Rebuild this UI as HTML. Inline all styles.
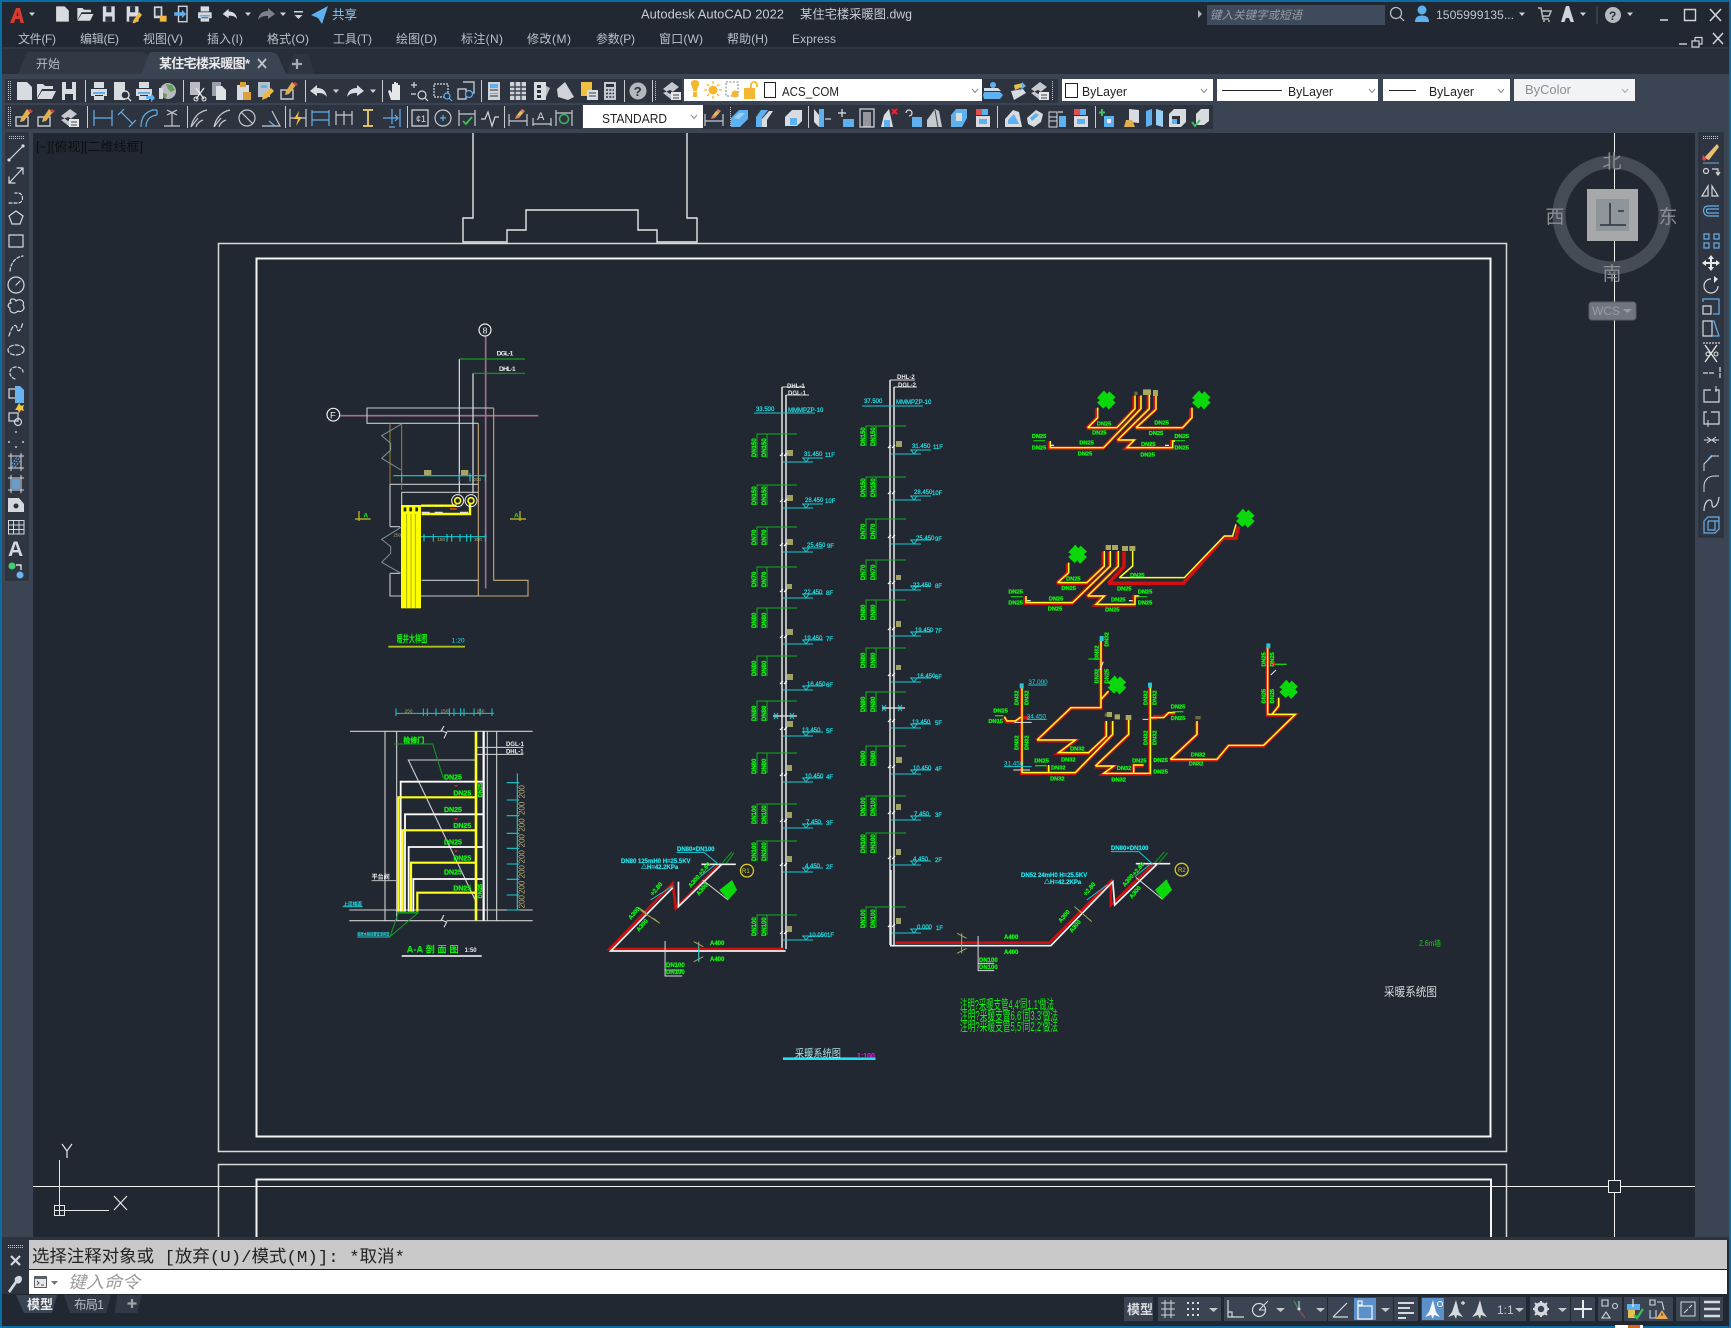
<!DOCTYPE html>
<html lang="zh"><head><meta charset="utf-8"><title>AutoCAD</title>
<style>
html,body{margin:0;padding:0;background:#222831;width:1731px;height:1328px;overflow:hidden}
svg{display:block;position:absolute;left:0;top:0;font-family:"Liberation Sans","Noto Sans CJK SC",sans-serif}
svg *{vector-effect:non-scaling-stroke}
.m{font-size:12px;fill:#b9c0c8}
.g{fill:none;stroke:#10b020;stroke-width:1}
.w{fill:none;stroke:#e8e8e8;stroke-width:1.5}
.c{fill:none;stroke:#19c8d0;stroke-width:1}
.r{fill:none;stroke:#d01010;stroke-width:3.6;stroke-linejoin:miter}
.y{fill:none;stroke:#ffff20;stroke-width:1.5}
.ic{fill:none;stroke:#d5d9de;stroke-width:1.2}
.ib{fill:none;stroke:#66aee8;stroke-width:1.2}
.dg{font-size:6px;font-weight:bold;fill:#10ee10;stroke:#10ee10;stroke-width:.3}
.dc{font-size:6px;fill:#20e0e8;stroke:#20e0e8;stroke-width:.2}
.dz{font-size:17px;font-weight:bold;fill:#10ee10;stroke:#10ee10;stroke-width:.3}
.dw{font-size:6px;font-weight:bold;fill:#e8e8e8}
.sb{fill:#3b4453}
</style></head><body>
<svg width="1731" height="1328" viewBox="0 0 1731 1328" xmlns="http://www.w3.org/2000/svg">
<defs>
<path id="n" fill="#d8dbdf" d="M-7-9H3l5 5V9H-7z"/>
<path id="o" fill="#d8dbdf" d="M-9-7H-3L-1-5H7V-2H-4L-9 7ZM-4 0H10L6 8H-9Z"/>
<g id="s"><path fill="#d8dbdf" d="M-7-9H7V9H-7z"/><path fill="#2b323e" d="M-3-9H3V-2H-3zM-4 3H4V9H-4z"/></g>
<g id="sa"><use href="#s"/><path fill="#f0b840" d="M8-2l3 3-7 9-4 1 1-4z"/></g>
<g id="pr"><path fill="#d8dbdf" d="M-5-9H5V-3H-5zM-8-2H8V5H5V9H-5V5H-8z"/><path fill="#5fb0ee" d="M-6 1H6V3H-6z"/><path fill="#2b323e" d="M-4 4H4V5H-4z"/></g>
<g id="pv"><path fill="#d8dbdf" d="M-7-9H4V9H-7z"/><circle cx="4" cy="4" r="4" fill="#2b323e" stroke="#d8dbdf" stroke-width="1.4"/><path stroke="#d8dbdf" stroke-width="1.4" d="M7 7l3 3"/></g>
<g id="pb"><use href="#pr"/><path fill="#5fb0ee" d="M2 5h5V2l4 5-4 4V8H2z"/></g>
<g id="gl"><circle r="8" fill="#b8bcc2"/><path fill="#6aa05a" d="M-2-7l6 1 3 5-4 2-3-3zM-5 2l4 1-1 5-3-2z"/><path fill="#d8dbdf" d="M-9-3H-5V8H-9z"/></g>
<g id="cu"><path fill="#b8bcc2" d="M-7-9H3V4H-7z"/><path stroke="#eee" stroke-width="1.2" fill="none" d="M-1-3l8 11M7-3L-1 8"/><circle cx="-1" cy="8" r="2" fill="none" stroke="#eee"/><circle cx="7" cy="8" r="2" fill="none" stroke="#eee"/></g>
<g id="cp"><path fill="#9aa0a8" d="M-7-9H2V5H-7z"/><path fill="#e0e3e6" d="M-3-5H3l4 4V9H-3z"/></g>
<g id="pa"><path fill="#d8dbdf" d="M-6-6H6V9H-6z"/><path fill="#d9a23a" d="M-3-9H3V-4H-3zM0 1H8V9H0z"/></g>
<g id="ma"><path fill="#b8c2cc" d="M-7-9H5V6H-7z"/><path fill="#5fb0ee" d="M-4-6H2V-3H-4z"/><path fill="#f0b840" d="M-2 4L6-3l3 3-7 7-5 2z"/></g>
<g id="be"><path fill="none" stroke="#c5c9ce" stroke-width="1.4" d="M-8-1H4V8H-8z"/><path fill="#e0b050" d="M3-9l4 3-7 9-4 1 1-4z"/><path fill="#d04040" d="M6-9l3 2-2 2-3-2z"/></g>
<path id="un" fill="#d8dbdf" d="M-9 0L-2-6V-3C4-3 7 0 8 6C5 2 2 2-2 2V5Z"/>
<path id="re" fill="#d8dbdf" d="M9 0L2-6V-3C-4-3-7 0-8 6C-5 2-2 2 2 2V5Z"/>
<path id="dn" fill="#d0d4d8" d="M-3-1.5H3L0 2Z"/>
<path id="ha" fill="#e4e6e8" d="M-5 9L-8 0l2-1 2 3V-7h2V-2V-9h2V-2V-8h2V-2V-6h2V3L4 9z"/>
<g id="zm"><circle cx="3" cy="4" r="4" fill="none" stroke="#d5d9de" stroke-width="1.2"/><path stroke="#d5d9de" stroke-width="1.2" d="M6 7l3 3M-8-6h6M-5-9v6M-8 3h5"/></g>
<g id="zw"><path fill="none" stroke="#d5d9de" stroke-width="1.2" stroke-dasharray="2 1" d="M-8-7H6V6H-8z"/><circle cx="5" cy="5" r="3" fill="#2b323e" stroke="#5fb0ee" stroke-width="1.2"/><path stroke="#5fb0ee" stroke-width="1.2" d="M7 7l3 3"/></g>
<g id="zp"><path fill="none" stroke="#d5d9de" stroke-width="1.2" d="M-8-2H0V8H-8zM-3-9H8V2H3"/><circle cx="3" cy="3" r="3.5" fill="#2b323e" stroke="#5fb0ee" stroke-width="1.2"/></g>
<g id="pp"><path fill="#cfd3d8" d="M-6-9H6V9H-6z"/><path fill="#5fb0ee" d="M-4-7H4V-3H-4zM-4 2H4V3H-4z"/><path stroke="#2b323e" d="M-4-1H4M-4 5H4"/></g>
<g id="sh"><path fill="#cfd3d8" d="M-8-9H8V9H-8z"/><path stroke="#3b4453" stroke-width="1.4" d="M-8-4H8M-8 0H8M-8 4H8M-3-9V9M3-9V9"/></g>
<g id="tp"><path fill="#d8dbdf" d="M-7-9H5V9H-7z"/><path fill="#2b323e" d="M-4-6H0V-3H-4zM-4-1H0V2H-4zM-4 4H0V7H-4z"/><path fill="#b8bcc2" d="M5-5l4 2-4 9z"/></g>
<path id="wd" fill="#cfd3d8" d="M-8-2L0-9 9 6 3 9-7 6z"/>
<g id="yd"><path fill="#f0c040" d="M-8-9H3V5H-8z"/><path fill="#d8dbdf" d="M-2-1H9V9H-2z"/><path stroke="#3b4453" d="M0 2H7M0 5H7"/></g>
<g id="ca"><path fill="#c5c9ce" d="M-6-9H6V9H-6z"/><path fill="#2b323e" d="M-4-7H4V-4H-4z"/><path stroke="#2b323e" stroke-width="1.4" stroke-dasharray="2 1.3" d="M-4-1H4M-4 2.500H4M-4 6H4"/></g>
<g id="q"><circle r="8.500" fill="#b5b8bc"/><text x="-4.300" y="5" font-size="13" font-weight="bold" fill="#2b323e">?</text></g>
<g id="la"><path fill="#c5c9ce" d="M-9-2L0-9 7-4-2 3zM-9 2l9 7 7-5-9-5z"/><path fill="#e8e8e8" d="M-1 1H9V9H-1z"/><path stroke="#3b4453" d="M1 4H7M1 7H7"/></g>
<g id="lb"><path fill="#5fb0ee" d="M-9 1h16l3 3-3 4H-9l-1-4z"/><path fill="#d8dbdf" d="M-9-3H5l3 3H-9z"/><circle cx="0" cy="-6" r="3" fill="#5fb0ee"/></g>
<g id="lc"><path fill="#d8dbdf" d="M-7 0L5-2 8 2-4 9z"/><path fill="#e0c050" d="M-4-6L5-8 7-5-3-1z"/><path fill="#5fb0ee" d="M0-4h4V-9l4 4-4 3z"/></g>
<g id="dh"><path fill="none" stroke="#66aee8" stroke-width="1.2" d="M-9-8V8M9-8V8M-9 0H9"/></g>
<g id="da"><path fill="none" stroke="#66aee8" stroke-width="1.2" d="M-9-3L-3-9M2 9L9 2M-6-6L6 6"/></g>
<g id="dr"><path fill="none" stroke="#66aee8" stroke-width="1.2" d="M-8 9C-8 0-4-6 4-8M-3 9C-3 3 0-2 8-3M8-8L3-8M8-8V-3"/></g>
<g id="do"><path fill="none" stroke="#c5c9ce" stroke-width="1.2" d="M-8 8H8M0 8V-6M-5-8L5-3M5-8L-5-3"/></g>
<g id="dl"><path fill="none" stroke="#c5c9ce" stroke-width="1.2" d="M-9 9C-7 0-2-6 7-8M-9 9L-2 0M-4 9C-3 5 0 3 3 2"/></g>
<g id="dc"><circle r="8" fill="none" stroke="#c5c9ce" stroke-width="1.2"/><path stroke="#c5c9ce" stroke-width="1.2" d="M-6-6L6 6"/></g>
<g id="dn2"><path fill="none" stroke="#c5c9ce" stroke-width="1.2" d="M-9 8H9L1-7"/><path stroke="#66aee8" stroke-width="1.2" d="M-2 3L4 8"/></g>
<g id="qd"><path fill="none" stroke="#c5c9ce" stroke-width="1.2" d="M-8-9V9M8-9V9M-8 0H8"/><path fill="#f0c040" d="M1-7L-4 1H0L-2 8 4-1H0z"/></g>
<g id="ba"><path fill="none" stroke="#66aee8" stroke-width="1.2" d="M-9-8V8M8-8V8M-9-6H8M-9 2H8"/></g>
<g id="co"><path fill="none" stroke="#c5c9ce" stroke-width="1.2" d="M-8-7V7M0-7V7M8-7V7M-8-3H8"/></g>
<g id="sp"><path stroke="#d8c070" stroke-width="2" d="M-5-8H5M-5 8H5M0-8V8"/></g>
<g id="tl"><path fill="none" stroke="#66aee8" stroke-width="1.2" d="M8-9V9M-9 0H6M3-3L6 0 3 3M0-9V6M-3 9H3"/></g>
<g id="il"><path fill="none" stroke="#d5d9de" stroke-width="1.2" d="M-8-8H8V8H-8z"/><text x="-4" y="4" font-size="9" fill="#d5d9de">¢1</text></g>
<g id="cc"><circle r="8" fill="none" stroke="#c5c9ce" stroke-width="1.2"/><path stroke="#66aee8" stroke-width="1.2" d="M-3 0H3M0-3V3"/></g>
<g id="io"><path fill="none" stroke="#c5c9ce" stroke-width="1.2" d="M-8-8V8M8-8V8M-8-4H8"/><path fill="none" stroke="#40c050" stroke-width="1.8" d="M-4 3L-1 6 5-1"/></g>
<g id="wv"><path fill="none" stroke="#d5d9de" stroke-width="1.2" d="M-9 1H-5L-2-6 2 8 5-1H9"/></g>
<g id="dd"><path fill="none" stroke="#c5c9ce" stroke-width="1.2" d="M-9-4V8M9-4V8M-9 3H9"/><path fill="#e08060" d="M4-9l3 2-6 7-4 1 1-3z"/><path fill="#e0c050" d="M2-7l3 2-3 3-3-1z"/></g>
<g id="da2"><text x="-5" y="2" font-size="11" fill="#d5d9de">A</text><path fill="none" stroke="#c5c9ce" stroke-width="1.2" d="M-9 0V8M9 0V8M-9 6H9"/></g>
<g id="du"><path fill="none" stroke="#c5c9ce" stroke-width="1.2" d="M-8-8V8M8-8V8M-8-5H8"/><circle cy="1" r="4.500" fill="none" stroke="#40b060" stroke-width="1.6"/></g>
<g id="bk"><path fill="#5fb0ee" d="M-8 0L0-8H9V1L1 9H-8z"/><path fill="#9acff5" d="M-5 0L0-5H6L0 1z"/></g>
<g id="bw"><path fill="#5fb0ee" d="M-8 9V-1L-3-8H4L-2 0V9z"/><path fill="#d8dbdf" d="M-2 1L5-7H9L3 2V9H-2z"/></g>
<g id="bc"><path fill="#d8dbdf" d="M-8-1L-1-8H9V3L4 8H-8z"/><path fill="#5fb0ee" d="M-3 0H4V7H-3z"/></g>
<g id="bv"><path fill="#d8dbdf" d="M-8-9L-3-3V9L-8 4z"/><path fill="#5fb0ee" d="M-3-9H2V9H-3z"/><path stroke="#fff" d="M3 1H9"/></g>
<g id="bt"><path stroke="#e4e6e8" stroke-width="1.2" d="M-4-9V-1M-8-5H0"/><path fill="#5fb0ee" d="M-3 1H8V9H-3z"/></g>
<g id="bd"><path fill="none" stroke="#d8dbdf" stroke-width="1.2" d="M-7-9H7V9H-7z"/><path fill="#d8dbdf" d="M-4-6H4V9H-4z" fill-opacity=".6"/></g>
<g id="bx"><path fill="#d8dbdf" d="M-8 9L-5-3 0-9 4 9z"/><path fill="#5fb0ee" d="M-5 2H1V9H-5z" /><path stroke="#e23" stroke-width="2" d="M3-9L8-4M8-9L3-4"/></g>
<g id="br"><path fill="none" stroke="#e4e6e8" stroke-width="1.2" d="M-8-5a3 3 0 1 1 3 3"/><path fill="#5fb0ee" d="M-2-1H8V9H-2z"/></g>
<g id="bf"><path fill="#c5c9ce" d="M-8 9V2L0-9 4-7 7 9z"/><path stroke="#3b4453" d="M0-8L3 9"/></g>
<g id="bb"><path fill="#5fb0ee" d="M-8-3L-3-9H8V0L3 9H-8z"/><path fill="#d8dbdf" d="M-3-5H3V3H-3z"/></g>
<g id="bq"><path fill="#e05050" d="M-6-9H0V-3H-6z"/><path fill="#5fb0ee" d="M0-9H6V-3H0z"/><path fill="#d8dbdf" d="M-6-2H8V9H-6z"/><path fill="#5fb0ee" d="M-3 1H5V6H-3z"/></g>
<g id="bh"><path fill="#d8dbdf" d="M-8 9V1L0-8 6-6 9 9z"/><path fill="#5fb0ee" d="M-5 6V2L1-4 6 6z"/></g>
<g id="bi"><path fill="#d8dbdf" d="M-8 0L1-8 8-4 6 4-1 9-7 6z"/><path fill="#5fb0ee" d="M-5 0L1-5 4-3-3 3z"/></g>
<g id="bl2"><path fill="none" stroke="#d8dbdf" d="M-8-6H0V9H-8z"/><path stroke="#d8dbdf" d="M-8-1H0M-8 3H0"/><path fill="#5fb0ee" d="M2-2H9V9H2z"/><path stroke="#fff" d="M1-6H6"/></g>
<g id="ta"><path stroke="#40c060" stroke-width="2" d="M-5-9V-2M-8-5.500H-2"/><path fill="#5fb0ee" d="M-3-2H7V9H-3z"/><path fill="#eef" d="M0 1H4V5H0z"/></g>
<g id="tb"><path fill="#d8dbdf" d="M-3-9L7-8V5L-3 4z"/><path fill="#e0b050" d="M-6 2H0L3 9H-8z"/></g>
<g id="tc"><path fill="#5fb0ee" d="M-8-7L-2-9V7L-8 9z"/><path fill="#9acff5" d="M2-9L9-7V9L2 7z"/></g>
<g id="td"><path fill="#d8dbdf" d="M-8-4L-3-9H9V4L4 9H-8z"/><path fill="#2b323e" d="M-5-2H3V6H-5z"/><path fill="#5fb0ee" d="M-5 1H0V6H-5z"/></g>
<g id="te"><path fill="#d8dbdf" d="M-4-4L1-9H9V3L4 7H-4z"/><path fill="none" stroke="#40c060" stroke-width="1.8" d="M-8 4L-5 8 0 2"/></g>
<path id="bl" fill="#0ad80a" d="M-27-6L-6-29 3-18 10-26 29-8 20 0 29 8 8 29 0 18-8 26-27 8-18 0z"/>
<g id="lv"><path fill="none" stroke="#19c8d0" d="M0 0H30M19-4H40M20-4l3 4 3-4"/><path fill="none" stroke="#fff" stroke-width="1.200" d="M-3-6l3-3M1-6l3-3"/></g>
<path id="ex" fill="none" stroke="#e8e8e8" d="M-2-7L2-2-2 2 2 7"/>
</defs>

<!-- window chrome -->
<rect width="1731" height="1328" fill="#222831"/>
<rect x="0" y="29" width="1731" height="19" fill="#222833"/>
<path d="M0 48H1731" stroke="#3b4453"/>
<rect y="49" width="1731" height="25" fill="#282f3a"/>
<rect y="74" width="1731" height="59" fill="#3b4453"/>

<!-- title bar -->
<path fill="#d83a30" d="M10 23L16 8H20L24 23H20.500L19.500 19H15.500L14 23ZM16.500 16H18.500L17.600 11.500Z"/>
<use href="#dn" x="32" y="14"/>
<g transform="translate(0,14) scale(.85)">
<use href="#n" x="73"/><use href="#o" x="100"/><use href="#s" x="128"/><use href="#sa" x="156"/>
</g>
<g transform="translate(0,14) scale(.85)">
<path fill="#cfd3d8" d="M181-9H191V5H181z"/><path fill="#2b323e" d="M183-7H189V2H183z"/><path fill="#f0b840" d="M188 2H196V9H188z"/>
<path fill="none" stroke="#cfd3d8" stroke-width="1.400" d="M210-9H220V9H210z"/><path fill="#5fb0ee" d="M205-2H214V-5L219 0 214 5V2H205z"/>
<use href="#pr" x="241"/><use href="#un" x="271"/>
</g>
<use href="#dn" x="248" y="14"/><use href="#re" x="266" y="14" opacity=".5" transform="translate(0,0)"/><use href="#dn" x="283" y="14"/>
<path fill="#d0d4d8" d="M294 11H303V12.500H294zM294.500 15H302.500L298.500 19z"/>
<path fill="#5fb0ee" d="M311 15L328 6 322 24 318 18z"/>
<text x="332" y="19" font-size="12.500" fill="#8fc4f0">共享</text>
<text x="641" y="18.500" font-size="12.500" fill="#c8ccd2" textLength="143" lengthAdjust="spacingAndGlyphs">Autodesk AutoCAD 2022</text>
<text x="800" y="18.500" font-size="12.500" fill="#c8ccd2" textLength="112" lengthAdjust="spacingAndGlyphs">某住宅楼采暖图.dwg</text>
<path fill="#b0b4b8" d="M1198 10L1202 14 1198 18z"/>
<rect x="1207" y="5" width="178" height="20" fill="#3f4a5c"/>
<text x="1210" y="19" font-size="11.500" font-style="italic" fill="#969ca4">键入关键字或短语</text>
<circle cx="1396" cy="13" r="5.500" fill="none" stroke="#c0c4c8" stroke-width="1.200"/><path stroke="#c0c4c8" stroke-width="1.200" d="M1400 17L1404 21"/>
<circle cx="1422" cy="10" r="4.500" fill="#5fb0ee"/><path fill="#5fb0ee" d="M1415 22C1415 17 1418 15.500 1422 15.500 1426 15.500 1429 17 1429 22z"/>
<text x="1436" y="19" font-size="12" fill="#c0c6cc" textLength="78" lengthAdjust="spacingAndGlyphs">1505999135...</text>
<use href="#dn" x="1522" y="14"/>
<path fill="none" stroke="#b8bcc0" stroke-width="1.500" d="M1538 8H1541L1543 19H1549M1541 11H1551L1549 16H1542"/><circle cx="1544" cy="21" r="1" fill="#b8bcc0"/><circle cx="1549" cy="21" r="1" fill="#b8bcc0"/>
<path fill="#d0d4d8" d="M1566 6H1569L1574 22H1570.500L1569 18H1566L1564.500 22H1561z"/>
<use href="#dn" x="1583" y="14"/><path stroke="#4a5260" d="M1597 6V24"/>
<circle cx="1613" cy="15" r="8" fill="#b5b8bc"/><text x="1609" y="20" font-size="12" font-weight="bold" fill="#2b323e">?</text><use href="#dn" x="1630" y="14"/>
<path stroke="#d0d4d8" stroke-width="1.600" d="M1660 20H1668"/>
<rect x="1684.500" y="9.500" width="11" height="11" fill="none" stroke="#d0d4d8" stroke-width="1.400"/>
<path stroke="#d0d4d8" stroke-width="1.600" d="M1710 9L1721 21M1721 9L1710 21"/>
<path stroke="#d0d4d8" stroke-width="1.400" d="M1679 44H1687"/>
<path fill="none" stroke="#d0d4d8" stroke-width="1.200" d="M1695 37.500H1702V44H1699M1695 37.500V41M1692 41H1699V47H1692z"/>
<path stroke="#d0d4d8" stroke-width="1.500" d="M1713 33L1723 44M1723 33L1713 44"/>

<!-- menu -->
<g class="m">
<text x="18" y="43" textLength="38">文件(F)</text><text x="80" y="43" textLength="39">编辑(E)</text><text x="143" y="43" textLength="40">视图(V)</text><text x="207" y="43" textLength="36">插入(I)</text><text x="267" y="43" textLength="42">格式(O)</text><text x="333" y="43" textLength="39">工具(T)</text><text x="396" y="43" textLength="41">绘图(D)</text><text x="461" y="43" textLength="42">标注(N)</text><text x="527" y="43" textLength="44">修改(M)</text><text x="596" y="43" textLength="39">参数(P)</text><text x="659" y="43" textLength="44">窗口(W)</text><text x="727" y="43" textLength="41">帮助(H)</text><text x="792" y="43" textLength="44">Express</text>
</g>
<!-- tabs -->
<path fill="#323945" d="M18 74L26 54Q27 52 30 52H140Q146 52 148 56L155 74z"/>
<path fill="#3b4453" d="M141 74L149 54Q150 52 153 52H270Q276 52 278 56L286 74z"/>
<path fill="#2f3642" d="M287 74L293 56Q294 54 297 54H304Q308 54 309 56L314 74z"/>
<text x="36" y="68" font-size="12" fill="#b5bbc3">开始</text>
<text x="159" y="68" font-size="13" font-weight="bold" fill="#e8eaec" textLength="91">某住宅楼采暖图*</text>
<path stroke="#c0c4c8" stroke-width="1.800" d="M258 59L266 68M266 59L258 68"/>
<path stroke="#a8acb0" stroke-width="2.200" d="M297 59V69M292 64H302"/>

<!-- toolbars -->
<rect x="5" y="79" width="677" height="24" fill="#2d3440"/>
<rect x="982" y="79" width="76" height="24" fill="#2d3440"/>
<rect x="5" y="105" width="577" height="24" fill="#2d3440"/>
<rect x="703" y="105" width="24" height="24" fill="#2d3440"/>
<rect x="727" y="105" width="486" height="24" fill="#2d3440"/>
<g transform="translate(0,91) scale(1)">
<use href="#n" x="24"/><use href="#o" x="46"/><use href="#s" x="69"/><use href="#pr" x="99"/><use href="#pv" x="121"/><use href="#pb" x="144"/><use href="#gl" x="168"/><use href="#cu" x="197"/><use href="#cp" x="219"/><use href="#pa" x="243"/><use href="#ma" x="265"/><use href="#be" x="289"/><use href="#un" x="319"/><use href="#dn" x="336"/><use href="#re" x="355"/><use href="#dn" x="373"/><use href="#ha" x="396"/><use href="#zm" x="419"/><use href="#zw" x="442"/><use href="#zp" x="466"/><use href="#pp" x="494"/><use href="#sh" x="518"/><use href="#tp" x="541"/><use href="#wd" x="565"/><use href="#yd" x="589"/><use href="#ca" x="610"/><use href="#q" x="638"/><use href="#la" x="672"/>
</g>
<path stroke="#c8ccd0" d="M85.500 80V102M183.500 80V102M305.500 80V102M382.500 80V102M481.500 80V102M624.500 80V102M652.500 80V102"/>
<path stroke="#c8ccd0" stroke-dasharray="1 1" d="M8.500 81V101M10.500 81V101M655.500 81V101M8.500 107V127M10.500 107V127M730.500 107V127M1052.500 81V101"/>
<rect x="684" y="79" width="298" height="22" fill="#fff"/>
<g transform="translate(0,90)">
<path fill="#f5b731" d="M691-8a5 5 0 0 1 8 0c1 3-2 5-2 9h-4c0-4-3-6-2-9z"/><path fill="#f5b731" d="M693 2h4v5h-4z"/>
<circle cx="713" r="4.500" fill="#f5b731"/><path stroke="#f5b731" stroke-width="1.300" d="M713-9V-6M713 6V9M704 0H707M719 0H722M707-6L709-4M717 4L719 6M707 6L709 4M717-4L719-6"/>
<path fill="none" stroke="#7a8088" stroke-dasharray="2 1.500" d="M726-8H738V6H726z"/><circle cx="735" cy="4" r="3.500" fill="#f5b731"/>
<path fill="#f5b731" d="M744-2H755V9H744z"/><path fill="none" stroke="#f5b731" stroke-width="1.800" d="M751-2V-5A3 3 0 0 1 757-5V-3"/>
<rect x="764.500" y="-7.500" width="11" height="15" fill="#fff" stroke="#222"/>
</g>
<text x="782" y="96" font-size="13" fill="#222" textLength="57" lengthAdjust="spacingAndGlyphs">ACS_COM</text>
<path fill="none" stroke="#888" d="M972 89L975 92.500 978 89"/>
<g transform="translate(0,91)"><use href="#lb" x="993"/><use href="#lc" x="1018"/><use href="#la" x="1040"/></g>
<rect x="1062" y="79" width="151" height="22" fill="#fff"/>
<rect x="1065.500" y="83.500" width="12" height="14" fill="#fff" stroke="#222"/>
<text x="1082" y="96" font-size="13" fill="#222" textLength="45" lengthAdjust="spacingAndGlyphs">ByLayer</text>
<path fill="none" stroke="#888" d="M1201 89L1204 92.500 1207 89"/>
<rect x="1217" y="79" width="161" height="22" fill="#fff"/>
<path stroke="#222" d="M1222 90.500H1282"/>
<text x="1288" y="96" font-size="13" fill="#222" textLength="45" lengthAdjust="spacingAndGlyphs">ByLayer</text>
<path fill="none" stroke="#888" d="M1369 89L1372 92.500 1375 89"/>
<rect x="1383" y="79" width="127" height="22" fill="#fff"/>
<path stroke="#222" d="M1389 90.500H1416"/>
<text x="1429" y="96" font-size="13" fill="#222" textLength="45" lengthAdjust="spacingAndGlyphs">ByLayer</text>
<path fill="none" stroke="#888" d="M1498 89L1501 92.500 1504 89"/>
<rect x="1514" y="79" width="121" height="22" fill="#f2f3f4"/>
<text x="1525" y="94" font-size="13" fill="#8a8e94" textLength="46" lengthAdjust="spacingAndGlyphs">ByColor</text>
<path fill="none" stroke="#aaa" d="M1622 89L1625 92.500 1628 89"/>

<g transform="translate(0,118)">
<use href="#be" x="24"/><use href="#be" x="46"/><use href="#la" x="70"/>
<use href="#dh" x="103"/><use href="#da" x="127"/><use href="#dr" x="149"/><use href="#do" x="172"/>
<use href="#dl" x="200"/><use href="#dl" x="223"/><use href="#dc" x="247"/><use href="#dn2" x="271"/>
<use href="#qd" x="298"/><use href="#ba" x="321"/><use href="#co" x="344"/><use href="#sp" x="368"/><use href="#tl" x="392"/>
<use href="#il" x="420"/><use href="#cc" x="443"/><use href="#io" x="467"/><use href="#wv" x="490"/>
<use href="#dd" x="518"/><use href="#da2" x="542"/><use href="#du" x="564"/>
<use href="#dd" x="714"/><use href="#bk" x="739"/><use href="#bw" x="764"/><use href="#bc" x="793"/>
<use href="#bv" x="822"/><use href="#bt" x="846"/><use href="#bd" x="867"/><use href="#bx" x="889"/><use href="#br" x="914"/><use href="#bf" x="935"/><use href="#bb" x="959"/><use href="#bq" x="982"/>
<use href="#bh" x="1013"/><use href="#bi" x="1035"/><use href="#bl2" x="1057"/><use href="#bq" x="1080"/>
<use href="#ta" x="1107"/><use href="#tb" x="1132"/><use href="#tc" x="1154"/><use href="#td" x="1177"/><use href="#te" x="1200"/>
</g>
<path stroke="#c8ccd0" d="M87.500 106V128M187.500 106V128M285.500 106V128M407.500 106V128M504.500 106V128M808.500 106V128M997.500 106V128M1095.500 106V128"/>
<rect x="583" y="105" width="120" height="23" fill="#fff"/>
<text x="602" y="123" font-size="13" fill="#222" textLength="65" lengthAdjust="spacingAndGlyphs">STANDARD</text>
<path fill="none" stroke="#888" d="M691 115L694 118.500 697 115"/>

<!-- side panels -->
<rect x="2" y="133" width="31" height="1104" fill="#3b4453"/>
<rect x="6" y="133" width="22" height="447" fill="#2f3642" stroke="#262c36"/>
<rect x="1695" y="133" width="34" height="1104" fill="#3b4453"/>
<rect x="1699" y="133" width="24" height="404" fill="#2f3642" stroke="#262c36"/>
<rect x="2" y="1237" width="1727" height="3" fill="#2d3440"/>
<path stroke="#c5c9ce" stroke-dasharray="1 1" d="M9 136.500H24M9 138.500H24M1703 136.500H1718M1703 138.500H1718"/>

<!-- CAD drawing -->
<text x="36" y="151" font-size="12.500" fill="#0c0f14" textLength="107" lengthAdjust="spacingAndGlyphs">[−][俯视][二维线框]</text>
<path fill="none" stroke="#e6e6e6" stroke-width="1.400" d="M473 133V218H463V242H507V230H526V210H638V230H657V242H697V218H687V133"/>
<rect x="218.500" y="243.500" width="1288" height="908" fill="none" stroke="#d8d8d8" stroke-width="1.500"/>
<rect x="256.500" y="258.500" width="1234" height="878" fill="none" stroke="#f4f4f4" stroke-width="2"/>
<path fill="none" stroke="#d8d8d8" stroke-width="1.500" d="M218.500 1237V1164.500H1506.500V1237"/>
<path fill="none" stroke="#f4f4f4" stroke-width="2" d="M256.500 1237V1179.500H1491V1237"/>

<!-- group A -->
<g transform="translate(300,310) scale(.33333)">
<path fill="none" stroke="#a86f90" stroke-width="1.600" d="M557 80V835M120 317H715"/>
<circle cx="555" cy="60" r="18" fill="none" stroke="#eee" stroke-width="1.200"/><text x="548" y="70" font-size="26" fill="#eee">8</text>
<circle cx="100" cy="314" r="19" fill="#222831" stroke="#eee" stroke-width="1.200"/><text x="90" y="325" font-size="28" fill="#eee">F</text>
<path fill="none" stroke="#c8c8c8" stroke-width="1.100" d="M535 340H201V294H581M270 650V523H535M270 650H300M305 585V547H535M270 790V858H535M270 790H300M365 811H535"/>
<path fill="none" stroke="#c8a878" stroke-width="1.100" d="M581 294V811H684V858H535V340"/>
<path fill="none" stroke="#a07c30" d="M270 340V523M305 340V490M305 490V540"/>
<path fill="none" stroke="#7f9298" d="M303 343L245 377 272 400V420L245 445 303 480M303 652L245 688 272 710V730L245 757 303 790"/>
<path fill="none" stroke="#e0e0e0" stroke-width="1.200" d="M478 147V550M519 190V550"/>
<path fill="none" stroke="#10a020" stroke-width="1.200" d="M478 147H675M519 190H675"/>
<text x="590" y="136" font-size="20" font-weight="bold" fill="#e8e8e8" textLength="50">DGL-1</text>
<text x="597" y="183" font-size="20" font-weight="bold" fill="#e8e8e8" textLength="50">DHL-1</text>
<path fill="none" stroke="#19c8d0" stroke-width="1.100" d="M280 497H560M305 490V515M478 490V515M510 490V515M556 490V515M350 680H560M305 672V695M372 672V695M400 672V695M441 672V695M455 672V695M480 672V695M500 672V695M512 672V695M556 672V695"/>
<path fill="#a5a565" d="M372 480h22v15h-22zM483 480h22v15h-22z"/>
<text x="520" y="513" font-size="14" fill="#b8b070">200</text><text x="280" y="680" font-size="14" fill="#b8b070">250</text><text x="412" y="693" font-size="14" fill="#b8b070">150</text><text x="522" y="693" font-size="14" fill="#b8b070">300</text>
<rect x="303" y="585" width="60" height="310" fill="#ffff00"/>
<path stroke="#b0b010" d="M320 612V895M333 612V895M346 612V895"/>
<path fill="#222831" d="M311 592h8v12h-8zM328 592h8v12h-8zM346 592h8v12h-8z"/>
<path fill="none" stroke="#ffff00" stroke-width="2.400" d="M363 587H470M365 612H510V578"/>
<path fill="none" stroke="#eee" stroke-width="1.200" stroke-dasharray="8 5" d="M365 587H430M365 607H430M480 607H505"/>
<path stroke="#e04010" stroke-width="1.600" d="M450 597H470"/>
<circle cx="473" cy="572" r="18" fill="none" stroke="#eee"/><circle cx="473" cy="572" r="9" fill="none" stroke="#ffff00" stroke-width="1.600"/>
<circle cx="513" cy="572" r="18" fill="none" stroke="#eee"/><circle cx="513" cy="572" r="9" fill="none" stroke="#ffff00" stroke-width="1.600"/>
<path fill="none" stroke="#c8c020" stroke-width="1.200" d="M165 627H212M177 603V633M630 627H678M660 603V633"/>
<text x="190" y="623" font-size="20" font-weight="bold" fill="#10ee10">A</text><text x="642" y="623" font-size="20" font-weight="bold" fill="#10ee10">A</text>
<text x="290" y="998" font-size="30" font-weight="bold" fill="#10ee10" textLength="92" lengthAdjust="spacingAndGlyphs">暖井大样图</text>
<text x="455" y="998" font-size="20" fill="#20e0e8">1:20</text>
<path stroke="#a8c020" stroke-width="1.800" d="M265 1010H495"/>
</g>

<!-- group B -->
<g transform="translate(330,690) scale(.33333)">
<path fill="none" stroke="#19c8d0" d="M198 70H492M198 55V78M280 55V78M292 55V78M318 55V78M358 55V78M372 55V78M392 55V78M402 55V78M432 55V78M450 55V78M486 55V78"/>
<text x="224" y="68" font-size="14" fill="#b8b070">250</text><text x="332" y="68" font-size="14" fill="#b8b070">150</text><text x="440" y="68" font-size="14" fill="#b8b070">150</text>
<path fill="none" stroke="#d0d0d0" stroke-width="1.100" d="M60 124H335M350 124H608M58 692H335M350 692H608M58 660H608M165 124V692M200 124V692M500 124V692M472 124V692M438 210H235L438 635"/>
<path fill="none" stroke="#eee" d="M342 108L334 122 350 128 342 145M342 675L334 690 350 696 342 712"/>
<path stroke="#fff" stroke-width="2.200" d="M461 124V692"/>
<path fill="none" stroke="#fff" stroke-width="1.800" d="M212 665V275H460M225 665V373H458M236 665V471H458M250 665V567H458"/>
<path fill="none" stroke="#ffff20" stroke-width="2.200" d="M205 665V322H438M218 665V421H438M243 665V518H438M262 665V608H438"/>
<path stroke="#ffff20" stroke-width="2.600" d="M438 124V692"/>
<path stroke="#0a9a20" stroke-width="1.800" d="M200 668H265"/>
<path fill="none" stroke="#10a020" d="M192 162H308L340 265M180 740L205 668M180 740L265 668"/>
<path fill="#e02020" d="M372 285h12l-6 7zM372 384h12l-6 7zM372 481h12l-6 7z"/>
<g class="dz" style="font-size:21px">
<text x="220" y="158">检修门</text><text x="342" y="268">DN25</text><text x="370" y="316">DN25</text><text x="342" y="366">DN25</text><text x="370" y="414">DN25</text><text x="342" y="463">DN25</text><text x="370" y="512">DN25</text><text x="342" y="553">DN25</text><text x="370" y="602">DN25</text>
</g>
<text transform="translate(456,322) rotate(-90)" class="dz">DN25</text><text transform="translate(456,625) rotate(-90)" class="dz">DN25</text>
<path fill="none" stroke="#19c8d0" stroke-width="1.100" d="M562 250V660M530 278H568M530 330H568M530 377H568M530 430H568M530 475H568M530 522H568M530 568H568M530 615H568M530 660H568"/>
<text transform="translate(584,325) rotate(-90)" font-size="24" fill="#b8b070">200</text><text transform="translate(584,375) rotate(-90)" font-size="24" fill="#b8b070">200</text><text transform="translate(584,425) rotate(-90)" font-size="24" fill="#b8b070">200</text><text transform="translate(584,472) rotate(-90)" font-size="24" fill="#b8b070">200</text><text transform="translate(584,520) rotate(-90)" font-size="24" fill="#b8b070">200</text><text transform="translate(584,565) rotate(-90)" font-size="24" fill="#b8b070">200</text><text transform="translate(584,612) rotate(-90)" font-size="24" fill="#b8b070">200</text><text transform="translate(584,655) rotate(-90)" font-size="24" fill="#b8b070">200</text>
<path fill="none" stroke="#d8d8d8" d="M438 172H580M438 193H580"/>
<text x="528" y="168" font-size="18" font-weight="bold" fill="#eee">DGL-1</text><text x="528" y="190" font-size="18" font-weight="bold" fill="#eee">DHL-1</text>
<text x="125" y="567" font-size="18" font-weight="bold" fill="#eee">平台间</text><path stroke="#bbb" d="M125 572H200"/>
<text x="40" y="646" font-size="14" font-weight="bold" fill="#20e0e8">上层楼面</text><path stroke="#19c8d0" d="M38 650H98"/>
<text x="82" y="737" font-size="12" font-weight="bold" fill="#20e0e8" textLength="96" lengthAdjust="spacingAndGlyphs">膨胀水箱接暖管道间管</text><path stroke="#19c8d0" d="M82 741H180"/>
<text x="230" y="788" font-size="28" font-weight="bold" fill="#10ee10" xml:space="preserve">A-A 剖 面 图</text>
<text x="404" y="786" font-size="18" font-weight="bold" fill="#e8e8e8">1:50</text>
<path stroke="#e0e0e0" stroke-width="1.800" d="M215 798H455"/>
</g>

<!-- riser diagrams (real coords) -->
<path class="w" d="M782 387V949M786 395V949M890 380V945M894 387V945"/>
<path fill="none" stroke="#d8d8d8" d="M782 387H805M786 395H809M890 380H915M894 387H917"/>
<text x="787" y="388" class="dw">DHL-1</text><text x="788" y="395" class="dw">DGL-1</text>
<text x="897" y="379" class="dw">DHL-2</text><text x="898" y="387" class="dw">DGL-2</text>
<path class="c" d="M754 413H815M862 406H923"/>
<text x="756" y="411" class="dc">33.500</text><text x="864" y="403" class="dc">37.500</text>
<text x="788" y="412" class="dc">MMMPZP-10</text><text x="896" y="404" class="dc">MMMPZP-10</text>
<path class="g" d="M797 434H757V458M767 434V458M797 485H757V505M767 485V505M797 527H757V545M767 527V545M797 567H757V587M767 567V587M797 608H757V628M767 608V628M797 656H757V676M767 656V676M797 701H757V721M767 701V721M797 753H757V773M767 753V773M797 804H757V824M767 804V824M797 841H757V861M767 841V861M797 915H757V935M767 915V935"/>
<path class="g" d="M906 426H866V446M876 426V446M906 477H866V497M876 477V497M906 519H866V539M876 519V539M906 560H866V580M876 560V580M906 600H866V620M876 600V620M906 648H866V668M876 648V668M906 692H866V712M876 692V712M906 746H866V766M876 746V766M906 796H866V816M876 796V816M906 833H866V853M876 833V853M906 907H866V927M876 907V927"/>
<g fill="#a0a060"><path d="M787 450h6v6h-6zM787 495h6v6h-6zM787 539h6v6h-6zM787 584h5v5h-5zM787 629h6v6h-6zM787 674h6v6h-6zM787 721h6v6h-6zM787 765h5v6h-5zM787 812h5v6h-5zM787 856h5v6h-5zM787 926h5v6h-5zM896 441h6v6h-6zM896 575h5v5h-5zM896 621h5v6h-5zM896 665h5v5h-5zM896 757h6v6h-6zM896 804h5v6h-5zM896 849h5v6h-5zM896 918h5v6h-5z"/></g>
<use href="#lv" x="783" y="462"/><use href="#lv" x="783" y="508"/><use href="#lv" x="783" y="552"/><use href="#lv" x="783" y="598"/><use href="#lv" x="783" y="644"/><use href="#lv" x="783" y="690"/><use href="#lv" x="783" y="736"/><use href="#lv" x="783" y="782"/><use href="#lv" x="783" y="828"/><use href="#lv" x="783" y="872"/><use href="#lv" x="783" y="940"/>
<use href="#lv" x="891" y="454"/><use href="#lv" x="891" y="500"/><use href="#lv" x="891" y="544"/><use href="#lv" x="891" y="590"/><use href="#lv" x="891" y="636"/><use href="#lv" x="891" y="682"/><use href="#lv" x="891" y="728"/><use href="#lv" x="891" y="774"/><use href="#lv" x="891" y="820"/><use href="#lv" x="891" y="865"/><use href="#lv" x="891" y="933"/>
<g class="dc">
<text x="804" y="456">31.450</text><text x="825" y="457">11F</text><text x="805" y="502">28.450</text><text x="825" y="503">10F</text><text x="807" y="547">25.450</text><text x="827" y="548">9F</text><text x="804" y="594">22.450</text><text x="826" y="595">8F</text><text x="804" y="640">19.450</text><text x="826" y="641">7F</text><text x="807" y="686">16.450</text><text x="826" y="687">6F</text><text x="802" y="732">13.450</text><text x="826" y="733">5F</text><text x="805" y="778">10.450</text><text x="826" y="779">4F</text><text x="806" y="824">7.450</text><text x="826" y="825">3F</text><text x="805" y="868">4.450</text><text x="826" y="869">2F</text><text x="809" y="937">10.050</text><text x="827" y="937">1F</text>
<text x="912" y="448">31.450</text><text x="933" y="449">11F</text><text x="914" y="494">28.450</text><text x="932" y="495">10F</text><text x="916" y="540">25.450</text><text x="935" y="541">9F</text><text x="913" y="587">22.450</text><text x="935" y="588">8F</text><text x="915" y="632">19.450</text><text x="935" y="633">7F</text><text x="917" y="678">16.450</text><text x="935" y="679">6F</text><text x="912" y="724">13.450</text><text x="935" y="725">5F</text><text x="913" y="770">10.450</text><text x="935" y="771">4F</text><text x="914" y="816">7.450</text><text x="935" y="817">3F</text><text x="913" y="861">4.450</text><text x="935" y="862">2F</text><text x="917" y="929">0.000</text><text x="936" y="930">1F</text>
</g>
<g class="dg">
<text transform="translate(756,457) rotate(-90)">DN150</text><text transform="translate(766,457) rotate(-90)">DN150</text><text transform="translate(756,505) rotate(-90)">DN150</text><text transform="translate(766,505) rotate(-90)">DN150</text><text transform="translate(756,545) rotate(-90)">DN70</text><text transform="translate(766,545) rotate(-90)">DN70</text><text transform="translate(756,587) rotate(-90)">DN70</text><text transform="translate(766,587) rotate(-90)">DN70</text><text transform="translate(756,628) rotate(-90)">DN80</text><text transform="translate(766,628) rotate(-90)">DN80</text><text transform="translate(756,676) rotate(-90)">DN80</text><text transform="translate(766,676) rotate(-90)">DN80</text><text transform="translate(756,721) rotate(-90)">DN80</text><text transform="translate(766,721) rotate(-90)">DN80</text><text transform="translate(756,774) rotate(-90)">DN80</text><text transform="translate(766,774) rotate(-90)">DN80</text><text transform="translate(756,824) rotate(-90)">DN100</text><text transform="translate(766,824) rotate(-90)">DN100</text><text transform="translate(756,861) rotate(-90)">DN100</text><text transform="translate(766,861) rotate(-90)">DN100</text><text transform="translate(756,936) rotate(-90)">DN100</text><text transform="translate(766,936) rotate(-90)">DN100</text>
<text transform="translate(865,446) rotate(-90)">DN150</text><text transform="translate(875,446) rotate(-90)">DN150</text><text transform="translate(865,497) rotate(-90)">DN150</text><text transform="translate(875,497) rotate(-90)">DN150</text><text transform="translate(865,539) rotate(-90)">DN70</text><text transform="translate(875,539) rotate(-90)">DN70</text><text transform="translate(865,580) rotate(-90)">DN70</text><text transform="translate(875,580) rotate(-90)">DN70</text><text transform="translate(865,620) rotate(-90)">DN80</text><text transform="translate(875,620) rotate(-90)">DN80</text><text transform="translate(865,668) rotate(-90)">DN80</text><text transform="translate(875,668) rotate(-90)">DN80</text><text transform="translate(865,712) rotate(-90)">DN80</text><text transform="translate(875,712) rotate(-90)">DN80</text><text transform="translate(865,766) rotate(-90)">DN80</text><text transform="translate(875,766) rotate(-90)">DN80</text><text transform="translate(865,816) rotate(-90)">DN100</text><text transform="translate(875,816) rotate(-90)">DN100</text><text transform="translate(865,853) rotate(-90)">DN100</text><text transform="translate(875,853) rotate(-90)">DN100</text><text transform="translate(865,928) rotate(-90)">DN100</text><text transform="translate(875,928) rotate(-90)">DN100</text>
</g>
<path stroke="#e8e8e8" stroke-width="1.200" d="M773 716H797M882 708H905"/>
<path stroke="#20d8e0" d="M774 713L778 719M778 713L774 719M790 713L794 719M794 713L790 719M882 705L886 711M886 705L882 711M898 705L902 711M902 705L898 711"/>

<!-- isometric bottom -->
<g transform="translate(600,720) scale(.38270,.33333)">
<path fill="none" stroke="#d01010" stroke-width="2.600" d="M480 687H25L190 490 198 565 310 435"/>
<path fill="none" stroke="#f0f0f0" stroke-width="1.700" d="M485 693H28L190 503M205 485V560L318 433M265 433H355"/>
<path fill="none" stroke="#d8d8d8" d="M268 480L335 540M170 663V768H215M170 750H215"/>
<path fill="none" stroke="#a8a858" d="M105 570L150 605M258 665V725M245 665L270 680M245 725L270 710M100 562L120 578M140 595L156 610"/>
<path fill="none" stroke="#19c8d0" d="M200 397H272L310 433M258 680V725M132 540L190 498M262 470L300 435"/>
<path fill="none" stroke="#10a020" d="M320 428L345 395M330 430L350 398"/>
<ellipse cx="384" cy="452" rx="17" ry="19" fill="none" stroke="#d8c820" stroke-width="1.300"/>
<path fill="#0ad80a" d="M312 510L345 480 358 510 335 540z"/>
<path fill="none" stroke="#d01010" stroke-width="2.600" d="M772 668H1175L1335 483V555L1445 433"/>
<path fill="none" stroke="#f0f0f0" stroke-width="1.700" d="M760 450V677H1178L1340 485 1345 555 1455 433M1400 431H1490"/>
<path fill="none" stroke="#d8d8d8" d="M988 648V752H1030M988 730H1030M1400 472L1470 538"/>
<path fill="none" stroke="#a8a858" d="M945 640V700M933 640L958 655M933 700L958 685M1240 560L1285 605"/>
<path fill="none" stroke="#19c8d0" d="M1335 395H1408L1445 433M1272 540L1325 495M1398 470L1435 435"/>
<path fill="none" stroke="#10a020" d="M1450 428L1475 395M1460 430L1483 398"/>
<ellipse cx="1520" cy="449" rx="17" ry="19" fill="none" stroke="#d8c820" stroke-width="1.300"/>
<path fill="#0ad80a" d="M1450 510L1480 478 1495 510 1470 538z"/>
<path stroke="#22e0f0" stroke-width="2.600" d="M478 1016H720"/>
</g>
<g class="dg">
<text x="666" y="967">DN100</text><text x="666" y="974">DN100</text><text x="710" y="945">A400</text><text x="710" y="961">A400</text>
<text x="979" y="962">DN100</text><text x="979" y="969">DN100</text><text x="1004" y="939">A400</text><text x="1004" y="954">A400</text>
<text transform="translate(631,920) rotate(-50)">A300</text><text transform="translate(639,932) rotate(-50)">A300</text><text transform="translate(653,896) rotate(-50)">+2.80</text><text transform="translate(691,888) rotate(-50)">A300</text><text transform="translate(699,896) rotate(-50)">A300</text><text transform="translate(701,876) rotate(-50)">+2.60</text>
<text transform="translate(1061,923) rotate(-50)">A300</text><text transform="translate(1072,933) rotate(-50)">A300</text><text transform="translate(1086,896) rotate(-50)">+2.80</text><text transform="translate(1125,887) rotate(-50)">A300</text><text transform="translate(1132,899) rotate(-50)">A300</text><text transform="translate(1135,876) rotate(-50)">+2.60</text>
</g>
<g class="dc" font-weight="bold">
<text x="621" y="863">DN80 125mH0 H=25.5KV</text><text x="641" y="869">△H=42.2KPa</text><text x="677" y="851">DN80×DN100</text>
<text x="1021" y="877">DN52 24mH0 H=25.5KV</text><text x="1044" y="884">△H=42.2KPa</text><text x="1111" y="850">DN80×DN100</text>
</g>
<text x="742" y="873" font-size="6" fill="#d8c820">R1</text><text x="1178" y="872" font-size="6" fill="#d8c820">R2</text>
<g fill="#10ee10" font-size="13">
<text x="960" y="1009" textLength="94" lengthAdjust="spacingAndGlyphs">注明?采暖支管4,4'同1,1'做法</text>
<text x="960" y="1020" textLength="98" lengthAdjust="spacingAndGlyphs">注明?采暖支管6,6'同3,3'做法</text>
<text x="960" y="1031" textLength="98" lengthAdjust="spacingAndGlyphs">注明?采暖支管5,5'同2,2'做法</text>
</g>
<text x="795" y="1057" font-size="11" fill="#a8dfe4" textLength="46" lengthAdjust="spacingAndGlyphs">采暖系统图</text>
<text x="857" y="1058" font-size="7" font-weight="bold" fill="#ff10ff">1:100</text>
<text x="1419" y="946" font-size="8" fill="#10d010" textLength="22" lengthAdjust="spacingAndGlyphs">2.6m墙</text>
<text x="1384" y="996" font-size="12" fill="#d8dade" textLength="53" lengthAdjust="spacingAndGlyphs">采暖系统图</text>

<!-- iso plans -->
<g transform="translate(990,370) scale(.33333)">
<path class="r" d="M290 175L320 145V115M290 175H378L432 118V78M178 215V235H338L450 118V78M435 175H575L603 145V115M435 175L495 120V75M380 212H430L408 235H545V215H552M380 212L475 118V72"/>
<path class="y" d="M290 175L320 145V115M290 175H378L432 118V78M178 215V235H338L450 118V78M435 175H575L603 145V115M435 175L495 120V75M380 212H430L408 235H545V215H552M380 212L475 118V72" transform="translate(3,-2)"/>
<use href="#bl" x="348" y="90"/><use href="#bl" x="633" y="90"/>
<path fill="#a8a860" d="M459 58h24v17h-24zM489 60h15v18h-15z"/><path fill="#6a6a40" d="M433 65h10v10h-10z"/>
<path stroke="#fff" stroke-width="1.200" d="M182 226H192M525 226H537"/>
<path stroke="#10d010" stroke-width="1.200" d="M130 212H165M555 212H585"/>
<g class="dz" text-anchor="middle"><text x="342" y="166">DN25</text><text x="328" y="193">DN25</text><text x="515" y="164">DN25</text><text x="498" y="195">DN25</text><text x="290" y="224">DN25</text><text x="285" y="256">DN25</text><text x="475" y="228">DN25</text><text x="473" y="259">DN25</text><text x="147" y="204">DN25</text><text x="147" y="238">DN25</text><text x="575" y="204">DN25</text><text x="575" y="238">DN25</text></g>
<path class="r" d="M200 640L233 610V580M200 640H288L340 590V545M105 680V700H245L358 590V545M355 640H580L700 505H738L745 470M355 640L402 590V545M290 680H340L315 705H432V680H445M290 680L382 590V545"/>
<path class="y" d="M200 640L233 610V580M200 640H288L340 590V545M105 680V700H245L358 590V545M385 625H580L700 500H725L735 465M385 625L425 590V545M290 680H340L315 705H432V680H445M290 680L382 590V545" transform="translate(3,-2)"/>
<use href="#bl" x="262" y="553"/><use href="#bl" x="765" y="445"/>
<path fill="#a8a860" d="M347 525h16v15h-16zM366 525h18v15h-18zM396 528h18v15h-18zM418 528h18v15h-18z"/>
<path stroke="#fff" stroke-width="1.200" d="M110 692H122M417 692H428"/>
<path stroke="#10d010" stroke-width="1.200" d="M62 680H98M445 680H472"/>
<g class="dz" text-anchor="middle"><text x="250" y="632">DN25</text><text x="236" y="660">DN25</text><text x="442" y="621">DN25</text><text x="403" y="661">DN25</text><text x="198" y="691">DN25</text><text x="195" y="722">DN25</text><text x="385" y="694">DN25</text><text x="367" y="725">DN25</text><text x="77" y="671">DN25</text><text x="77" y="704">DN25</text><text x="465" y="670">DN25</text><text x="465" y="704">DN25</text></g>
</g>
<g transform="translate(980,620) scale(.33333)">
<path class="r" d="M125 205V460H205V437M205 460H285L397 345V305M170 362H285L235 400H325L378 350V305M170 362L272 265H362V60M362 240L385 215M72 292L80 305H105L122 293H150M345 440H400L370 462H510V435M345 440L445 345V295M510 200V460M510 295H530L520 290H550L565 280H585M460 462V437H490M570 420H710L745 378H850L945 285H862V80M570 420L650 345V305M862 285H875L895 260V235M870 130H885"/>
<path class="y" d="M125 205V460H205V437M205 460H285L397 345V305M170 362H285L235 400H325L378 350V305M170 362L272 265H362V60M362 240L385 215M72 292L80 305H105L122 293M345 440H400L370 462H510V435M345 440L445 345V295M510 200V460M510 295H550L565 280H585M460 462V437H490M570 420H710L745 378H850L945 285H862V80M570 420L650 345V305M862 285H875L895 260V235" transform="translate(1,-2)"/>
<use href="#bl" x="410" y="195"/><use href="#bl" x="925" y="208"/>
<path fill="#a8a860" d="M380 276h16v15h-16zM404 283h16v15h-16zM437 285h17v15h-17z"/><path fill="#6a6a40" d="M646 288h16v10h-16zM374 280h6v10h-6z"/>
<path fill="#20c8d8" d="M119 190h12v15h-12zM504 188h12v15h-12zM359 48h12v15h-12zM859 70h12v15h-12z"/>
<path stroke="#10d010" stroke-width="1.300" d="M325 117H358M885 133H920M578 275H610M45 287H70M165 437H200"/>
<path stroke="#e8e8e8" d="M103 307H155M100 450H150M488 298H505M370 125L360 150M888 150L872 165"/>
<path class="c" d="M145 195H200M140 298H200M72 440H155"/>
<text x="145" y="192" font-size="19" fill="#20e0e8">37.000</text><text x="140" y="295" font-size="19" fill="#20e0e8">34.450</text><text x="72" y="437" font-size="19" fill="#20e0e8">31.450</text>
<g class="dz" text-anchor="middle"><text x="62" y="278">DN25</text><text x="47" y="309">DN15</text><text x="292" y="391">DN32</text><text x="265" y="424">DN32</text><text x="185" y="428">DN25</text><text x="235" y="449">DN32</text><text x="232" y="482">DN32</text><text x="478" y="428">DN25</text><text x="432" y="450">DN32</text><text x="416" y="484">DN32</text><text x="542" y="426">DN25</text><text x="542" y="460">DN25</text><text x="594" y="266">DN25</text><text x="594" y="300">DN25</text><text x="654" y="409">DN32</text><text x="648" y="436">DN32</text></g>
<g class="dz"><text transform="translate(116,255) rotate(-90)">DN32</text><text transform="translate(146,255) rotate(-90)">DN32</text><text transform="translate(116,390) rotate(-90)">DN32</text><text transform="translate(146,390) rotate(-90)">DN32</text><text transform="translate(355,190) rotate(-90)">DN32</text><text transform="translate(385,190) rotate(-90)">DN25</text><text transform="translate(355,120) rotate(-90)">DN32</text><text transform="translate(386,80) rotate(-90)">DN32</text><text transform="translate(502,255) rotate(-90)">DN32</text><text transform="translate(530,255) rotate(-90)">DN32</text><text transform="translate(502,375) rotate(-90)">DN32</text><text transform="translate(530,375) rotate(-90)">DN32</text><text transform="translate(856,140) rotate(-90)">DN25</text><text transform="translate(882,140) rotate(-90)">DN25</text><text transform="translate(856,250) rotate(-90)">DN25</text><text transform="translate(882,250) rotate(-90)">DN25</text></g>
</g>

<!-- crosshair -->
<path stroke="#f2f2f2" d="M1614.500 133V1237M33 1186.500H1695"/>
<rect x="1608.500" y="1180.500" width="12" height="12" fill="#222831" stroke="#f2f2f2"/>

<!-- UCS -->
<path fill="none" stroke="#e6e6e6" d="M59.500 1160V1205M65 1210.500H109M54.500 1205.500H64.500V1215.500H54.500zM54.500 1210.500H64.500M59.500 1205.500V1215.500"/>
<path fill="none" stroke="#e6e6e6" stroke-width="1.200" d="M62 1144L67 1151 72 1144M67 1151V1158M114 1196L127 1210M127 1196L114 1210"/>

<!-- view cube -->
<circle cx="1612" cy="215" r="53" fill="none" stroke="#464c56" stroke-width="13"/>
<rect x="1587" y="189" width="51" height="52" fill="#a6a8aa"/>
<rect x="1596" y="199" width="33" height="32" fill="#8e959b"/>
<path stroke="#3b4048" stroke-width="1.800" d="M1610 203V225M1600 225H1626M1618 211H1624"/>
<g fill="#8a8d91" font-size="19" text-anchor="middle"><text x="1612" y="168">北</text><text x="1612" y="280">南</text><text x="1555" y="223">西</text><text x="1668" y="223">东</text></g>
<rect x="1589" y="302" width="47" height="18" rx="3" fill="#71757f" stroke="#5a5e68"/>
<text x="1592" y="315" font-size="12" fill="#999ca4">WCS</text><path fill="#999ca4" d="M1623 309H1632L1627.500 313z"/>

<!-- left tool icons -->
<g class="ic" stroke-linecap="round">
<path d="M9 160L23 146"/><circle cx="9" cy="160" r="1" fill="#d5d9de"/><circle cx="23" cy="146" r="1" fill="#d5d9de"/>
<path d="M9 183L23 168M9 177V183H15M17 168H23V174"/>
<path stroke-dasharray="3 2" d="M9 203H18C24 203 24 193 18 193H15"/>
<path d="M16 211L23 216 20 224H12L9 216Z"/>
<rect x="9" y="235" width="14" height="12" stroke-dasharray="8 1"/>
<path stroke-dasharray="3 2" d="M10 271C11 262 16 257 23 256"/>
<circle cx="16" cy="285" r="8"/><path d="M16 285L20 281"/>
<path d="M11 303C8 298 15 298 16 301 20 298 25 301 23 305 26 309 21 313 18 311 14 315 9 312 10 308 7 307 8 303 11 303Z"/>
<path stroke-dasharray="4 2" d="M9 336C12 325 16 323 17 328 18 334 21 330 23 322"/>
<ellipse cx="16" cy="350" rx="8" ry="5" stroke-dasharray="4 2"/>
<path stroke-dasharray="3 2" d="M15 379C7 376 9 367 16 367 21 367 23 370 23 372"/>
<path d="M9 389H19V398H9z"/><circle cx="19" cy="399" r="3.500"/>
<path d="M9 413H18V421H9z"/><circle cx="18" cy="422" r="3.500"/>
</g>
<path fill="#69b4ee" d="M15 386H20L24 390V403H15z"/><path fill="#f5c840" d="M19 406L21 409 24 408 23 411 24 414 21 413 19 416 18 413 15 413 17 410z" transform="translate(0,-3)"/>
<g fill="#c5c9ce"><circle cx="16" cy="432" r="1"/><circle cx="9" cy="442" r="1"/><circle cx="23" cy="442" r="1"/><circle cx="16" cy="447" r="1"/></g>
<path fill="none" stroke="#d5d9de" d="M8 456H24M8 468H24M11 453V471M21 453V471"/>
<path stroke="#66aee8" stroke-width="1" stroke-dasharray="2 1" d="M12 467L20 457M15 467L20 461M12 464L17 457"/>
<path fill="none" stroke="#d5d9de" d="M8 478H24M8 490H24M11 475V493M21 475V493"/>
<rect x="12" y="479" width="8" height="10" fill="#6a9cc8"/>
<path fill="#d5d9de" d="M8 498H19L24 504V512H8z"/><circle cx="16" cy="506" r="2.500" fill="#2b323e"/>
<path fill="none" stroke="#d5d9de" d="M8.500 520.500H24V534H8.500zM8.500 525H24M8.500 529.500H24M13.500 520V534M19 520V534"/>
<text x="8" y="556" font-size="21" font-weight="bold" fill="#d5d9de">A</text>
<circle cx="12" cy="566" r="3.500" fill="#40d070"/><circle cx="20" cy="575" r="3.500" fill="#69b4ee"/>
<path fill="none" stroke="#fff" stroke-width="1.200" d="M16 565H21V570"/>

<!-- right tool icons -->
<path fill="#e8c070" d="M1704 158L1717 144 1719 147 1709 160z"/><path fill="#e04060" d="M1703 155L1707 159 1704 161 1702 159z"/><path stroke="#66aee8" d="M1703 163H1719"/>
<g class="ic">
<circle cx="1706" cy="171" r="2.500"/><path d="M1712 169H1718V174M1716 172L1718 175 1720 172"/>
<path d="M1708 196H1702L1708 186zM1712 186V196H1718z" stroke="#d5d9de"/>
<path d="M1719 206H1708C1702 206 1702 215 1708 216H1719M1719 209H1708C1706 209 1706 213 1708 213H1719" stroke="#66aee8"/>
<path d="M1704 234H1709V239H1704zM1714 234H1719V239H1714zM1704 243H1709V248H1704z" stroke="#66aee8"/>
<rect x="1714" y="243" width="5" height="5" stroke="#66aee8"/>
<path d="M1711 257V269M1705 263H1717" stroke-width="1.800"/>
<path d="M1718 286A7 7 0 1 1 1711 279"/>
<path d="M1703 306H1711V314H1703z"/><path d="M1703 302V299H1719V314H1713" stroke="#66aee8"/>
<path d="M1703 321H1712V336H1703z"/><path d="M1712 321H1714L1719 336H1712" stroke="#66aee8"/>
<path d="M1703 343H1720M1703 370M1703 343" stroke-dasharray="2 1"/>
<path d="M1703 373H1715M1720 367V379" stroke-dasharray="5 1"/>
<path d="M1704 390H1719V402H1704z"/>
<path d="M1704 412H1719V424H1704z"/>
</g>
<path fill="#e8e8e8" d="M1711 255L1714 259H1712V262H1716V260L1720 263 1716 266V264H1712V267H1714L1711 271 1708 267H1710V264H1706V266L1702 263 1706 260V262H1710V259H1708z"/>
<path fill="#e8e8e8" d="M1718 279L1714 283 1714 276z"/>
<path fill="none" stroke="#e8e8e8" stroke-width="1.300" d="M1705 345L1717 362M1717 345L1705 362"/><circle cx="1708" cy="354" r="2" fill="none" stroke="#e8e8e8"/><circle cx="1716" cy="354" r="2" fill="none" stroke="#e8e8e8"/>
<path fill="#2f3642" d="M1711 389h4v3h-4zM1707 411h4v3h-4z"/>
<path stroke="#d5d9de" d="M1716 386V392M1708 420V427"/>
<path fill="none" stroke="#d5d9de" d="M1704 440H1719M1707 437L1711 440 1707 443M1716 437L1712 440 1716 443"/>
<path fill="none" stroke="#d5d9de" d="M1704 471V464L1712 456H1719"/><path stroke="#66aee8" d="M1708 459L1712 455"/>
<path fill="none" stroke="#d5d9de" d="M1704 492V486C1704 481 1708 476 1714 476H1719"/>
<path fill="none" stroke="#d5d9de" stroke-width="1.200" d="M1704 511C1704 499 1712 497 1712 504 1712 510 1718 507 1719 497"/>
<path fill="none" stroke="#66aee8" stroke-width="1.200" d="M1704 530V521L1708 517H1719V529L1715 533H1704zM1708 521H1719M1708 521V530H1715V521"/>

<!-- command line -->
<rect x="2" y="1240" width="27" height="54" fill="#2d3440"/>
<path stroke="#c5c9ce" stroke-dasharray="1 1" d="M8 1245.500H24M8 1247.500H24"/>
<path stroke="#d5d9de" stroke-width="2.200" d="M11 1256L20 1265M20 1256L11 1265"/>
<path fill="#d5d9de" d="M18 1276C22 1275 23 1279 21 1282 19 1284 18 1284 17 1283L10 1293 8 1291 15 1281C14 1279 15 1277 18 1276z"/>
<rect x="29" y="1240" width="1698" height="29" fill="#c8c8c8"/>
<rect x="29" y="1269" width="1698" height="1" fill="#1a1e24"/>
<rect x="29" y="1270" width="1698" height="24" fill="#fff"/>
<text x="32" y="1262" font-family="'Liberation Mono','Noto Sans CJK SC',monospace" font-size="17" fill="#222" textLength="373" lengthAdjust="spacingAndGlyphs">选择注释对象或 [放弃(U)/模式(M)]: *取消*</text>
<rect x="34" y="1276" width="13" height="12" fill="#5a6068"/><rect x="35" y="1279" width="11" height="8" fill="#e8e8e8"/>
<path fill="none" stroke="#555" d="M37 1281L39 1283 37 1285M41 1285H44"/>
<path fill="#777" d="M51 1281H58L54.500 1285z"/>
<text x="68" y="1288" font-size="17" font-style="italic" fill="#9a9a9a" textLength="72" lengthAdjust="spacingAndGlyphs">键入命令</text>

<!-- bottom tabs -->
<rect x="2" y="1294" width="1727" height="32" fill="#222831"/>
<path fill="#3b4453" d="M16 1295H57L52 1313H24z"/>
<path fill="#333a47" d="M64 1295H111L106 1313H70z"/>
<path fill="#333a47" d="M117 1295H142L137 1313H115z"/>
<text x="27" y="1309" font-size="13" font-weight="bold" fill="#e8eaec">模型</text>
<text x="74" y="1309" font-size="12.500" fill="#b5bbc3" textLength="30">布局1</text>
<path stroke="#a0a4a8" stroke-width="2.200" d="M132 1299V1308M127.500 1303.500H136.500"/>

<!-- status -->
<g class="sb">
<rect x="1124" y="1297" width="29" height="24"/><rect x="1158" y="1297" width="63" height="24"/><rect x="1224" y="1297" width="103" height="24"/><rect x="1328" y="1297" width="65" height="24"/><rect x="1394" y="1297" width="24" height="24"/><rect x="1421" y="1297" width="105" height="24"/><rect x="1530" y="1297" width="40" height="24"/><rect x="1571" y="1297" width="24" height="24"/><rect x="1598" y="1297" width="24" height="24"/><rect x="1624" y="1297" width="49" height="24"/><rect x="1676" y="1297" width="23" height="24"/><rect x="1700" y="1297" width="23" height="24"/>
</g>
<rect x="1354" y="1298" width="22" height="22" fill="#5b90c8"/>
<rect x="1422" y="1298" width="22" height="22" fill="#5b90c8"/>
<text x="1127" y="1314" font-size="13" font-weight="bold" fill="#d8dade">模型</text>
<path stroke="#d5d9de" d="M1161 1303H1175M1161 1309H1175M1161 1315H1175M1165 1300V1318M1171 1300V1318"/>
<path stroke="#d5d9de" stroke-width="2" stroke-dasharray="2 3" d="M1187 1303H1200M1187 1309H1200M1187 1315H1200"/>
<path fill="#c5c9ce" d="M1209 1308H1218L1213.500 1312z"/>
<path fill="none" stroke="#d5d9de" stroke-width="1.200" d="M1228 1300V1317H1244M1232 1317V1312H1228"/>
<circle cx="1259" cy="1310" r="6.500" fill="none" stroke="#d5d9de" stroke-width="1.200"/><path stroke="#d5d9de" d="M1259 1310L1268 1301M1259 1310H1266"/>
<path fill="#c5c9ce" d="M1276 1308H1285L1280.500 1312zM1316 1308H1325L1320.500 1312zM1381 1308H1390L1385.500 1312zM1515 1308H1524L1519.500 1312zM1558 1308H1567L1562.500 1312z"/>
<path stroke="#40a050" d="M1294 1301L1299 1310"/><path stroke="#a05050" d="M1299 1310L1305 1318"/><path stroke="#d5d9de" d="M1299 1301V1310"/><circle cx="1299" cy="1309" r="1.500" fill="#d5d9de"/>
<path fill="none" stroke="#d5d9de" stroke-width="1.200" d="M1333 1317H1348M1333 1317L1347 1303M1340 1317"/>
<path fill="none" stroke="#f0f4f8" stroke-width="1.300" d="M1358 1306H1372V1319H1358zM1358 1301H1362V1305H1358z"/>
<path fill="#d5d9de" d="M1398 1302H1414V1304H1398zM1398 1307H1410V1309H1398zM1398 1312H1414V1314H1398zM1398 1317H1406V1319H1398z"/>
<g id="anno"><path fill="#f4f6f8" d="M1433 1300L1436 1312 1440 1317 1434 1315 1433 1319 1431 1315 1425 1317 1429 1312z"/></g>
<circle cx="1440" cy="1304" r="2.500" fill="none" stroke="#fff"/>
<path fill="#d5d9de" d="M1456 1300L1459 1312 1463 1317 1457 1315 1456 1319 1454 1315 1448 1317 1452 1312z"/><path stroke="#d5d9de" stroke-width="1.400" d="M1463 1301V1305M1461 1303H1465"/>
<path fill="#d5d9de" d="M1480 1300L1483 1312 1487 1317 1481 1315 1480 1319 1478 1315 1472 1317 1476 1312z"/>
<text x="1497" y="1314" font-size="12" fill="#c5c9ce">1:1</text>
<circle cx="1541" cy="1309" r="5" fill="none" stroke="#d5d9de" stroke-width="3.500"/>
<path stroke="#d5d9de" stroke-width="2" d="M1541 1301V1304M1541 1314V1317M1533 1309H1536M1546 1309H1549M1535 1303L1537 1305M1545 1313L1547 1315M1535 1315L1537 1313M1545 1305L1547 1303"/>
<path stroke="#e8eaec" stroke-width="2" d="M1583 1300V1318M1574 1309H1592"/>
<path fill="none" stroke="#d5d9de" stroke-width="1.100" d="M1602 1300H1608V1306H1602zM1606 1312L1602 1318H1610z"/><circle cx="1615" cy="1306" r="2.500" fill="none" stroke="#d5d9de"/>
<path fill="#5fb0ee" d="M1627 1304H1640V1310H1627z"/><path fill="#e8c050" d="M1628 1310H1635V1318H1628z"/><path fill="none" stroke="#3cc050" stroke-width="2.200" d="M1634 1315L1637 1318 1643 1309"/><path stroke="#fff" d="M1633 1299V1307"/>
<path fill="none" stroke="#d5d9de" stroke-width="1.100" d="M1650 1300H1655V1305H1650zM1656 1310V1318H1650V1310M1657 1302H1662L1664 1310"/>
<path fill="#e8a850" d="M1662 1310L1668 1319H1656z"/><path stroke="#2b323e" d="M1662 1313V1316"/>
<path fill="none" stroke="#d5d9de" d="M1681 1302H1695V1316H1681z"/><path stroke="#d5d9de" d="M1684 1313L1688 1309M1692 1305L1689 1308"/>
<path stroke="#d5d9de" stroke-width="2.400" d="M1704 1302H1720M1704 1309H1720M1704 1316H1720"/>

<!-- bottom accent -->
<rect x="1615" y="1325" width="28" height="3" fill="#fff"/><rect x="1628" y="1325" width="12" height="3" fill="#e06020"/>
<!-- window border -->
<rect x="0" y="0" width="1731" height="2" fill="#0a6ea4"/>
<rect x="0" y="0" width="2" height="1328" fill="#0a6ea4"/>
<rect x="1729" y="0" width="2" height="1328" fill="#0a6ea4"/>
<rect x="0" y="1326" width="1615" height="2" fill="#0a6ea4"/>
<rect x="1643" y="1326" width="88" height="2" fill="#0a6ea4"/>
</svg>
</body></html>
